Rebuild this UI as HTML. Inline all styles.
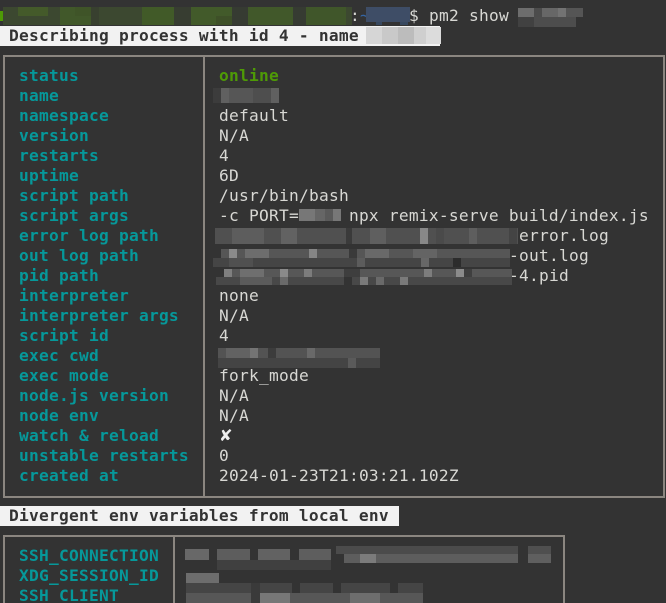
<!DOCTYPE html>
<html><head><meta charset="utf-8"><style>
html,body{margin:0;padding:0;background:#333;width:666px;height:603px;overflow:hidden}
#t{position:relative;width:666px;height:603px;overflow:hidden;font:16.2px/20px "DejaVu Sans Mono","Liberation Mono",monospace;letter-spacing:.25px;color:#d8d8d4}
.l{position:absolute;white-space:pre;height:20px}
.k{left:19px;color:#06989a;font-weight:bold}
.v{left:219px}
.b{position:absolute;background:#8b8680}
.bar{position:absolute;left:0;height:20px;background:#f2f2f2}
.h{color:#333;font-weight:bold}
svg{position:absolute;left:0;top:0}
</style></head><body><div id="t">
<div class="bar" style="top:26px;width:440px"></div>
<div class="bar" style="top:506px;width:399px"></div>
<div class="b" style="left:3px;top:55px;width:662px;height:2px"></div>
<div class="b" style="left:3px;top:496px;width:662px;height:2px"></div>
<div class="b" style="left:3px;top:55px;width:2px;height:443px"></div>
<div class="b" style="left:663px;top:55px;width:2px;height:443px"></div>
<div class="b" style="left:203px;top:55px;width:2px;height:443px"></div>
<div class="b" style="left:3px;top:535px;width:562px;height:2px"></div>
<div class="b" style="left:3px;top:535px;width:2px;height:68px"></div>
<div class="b" style="left:563px;top:535px;width:2px;height:68px"></div>
<div class="b" style="left:173px;top:535px;width:2px;height:68px"></div>

<div class="l" style="left:409px;top:6px">$ pm2 show</div>
<div class="l" style="left:350px;top:6px">:<span style="color:#3465a4">~</span></div>
<div class="l h" style="left:9px;top:26px">Describing process with id 4 - name</div>
<div class="l h" style="left:9px;top:506px">Divergent env variables from local env</div>

<div class="l k" style="top:66px">status</div><div class="l v" style="top:66px;color:#4e9a06;font-weight:bold">online</div>
<div class="l k" style="top:86px">name</div>
<div class="l k" style="top:106px">namespace</div><div class="l v" style="top:106px">default</div>
<div class="l k" style="top:126px">version</div><div class="l v" style="top:126px">N/A</div>
<div class="l k" style="top:146px">restarts</div><div class="l v" style="top:146px">4</div>
<div class="l k" style="top:166px">uptime</div><div class="l v" style="top:166px">6D</div>
<div class="l k" style="top:186px">script path</div><div class="l v" style="top:186px">/usr/bin/bash</div>
<div class="l k" style="top:206px">script args</div><div class="l v" style="top:206px">-c PORT=     npx remix-serve build/index.js</div>
<div class="l k" style="top:226px">error log path</div><div class="l" style="left:519px;top:226px">error.log</div>
<div class="l k" style="top:246px">out log path</div><div class="l" style="left:509px;top:246px">-out.log</div>
<div class="l k" style="top:266px">pid path</div><div class="l" style="left:509px;top:266px">-4.pid</div>
<div class="l k" style="top:286px">interpreter</div><div class="l v" style="top:286px">none</div>
<div class="l k" style="top:306px">interpreter args</div><div class="l v" style="top:306px">N/A</div>
<div class="l k" style="top:326px">script id</div><div class="l v" style="top:326px">4</div>
<div class="l k" style="top:346px">exec cwd</div>
<div class="l k" style="top:366px">exec mode</div><div class="l v" style="top:366px">fork_mode</div>
<div class="l k" style="top:386px">node.js version</div><div class="l v" style="top:386px">N/A</div>
<div class="l k" style="top:406px">node env</div><div class="l v" style="top:406px">N/A</div>
<div class="l k" style="top:426px">watch &amp; reload</div><div class="l v" style="top:426px;font-family:'DejaVu Sans',sans-serif;font-weight:bold;color:#eee">✘</div>
<div class="l k" style="top:446px">unstable restarts</div><div class="l v" style="top:446px">0</div>
<div class="l k" style="top:466px">created at</div><div class="l v" style="top:466px">2024-01-23T21:03:21.102Z</div>
<div class="l k" style="top:546px">SSH_CONNECTION</div>
<div class="l k" style="top:566px">XDG_SESSION_ID</div>
<div class="l k" style="top:586px">SSH_CLIENT</div>

<svg width="666" height="603" xmlns="http://www.w3.org/2000/svg" shape-rendering="crispEdges">
<!-- prompt green -->
<rect x="0" y="11" width="3" height="10" fill="#4e9a06"/>
<rect x="3" y="7" width="349" height="18" fill="#3c4830"/>
<rect x="18" y="7" width="30" height="9" fill="#445a2a"/>
<rect x="60" y="7" width="31" height="18" fill="#41582a"/>
<rect x="142" y="7" width="32" height="18" fill="#415a28"/>
<rect x="191" y="7" width="41" height="18" fill="#425a2a"/>
<rect x="248" y="7" width="45" height="18" fill="#41582a"/>
<rect x="306" y="7" width="40" height="18" fill="#40562a"/>
<rect x="75" y="7" width="16" height="9" fill="#3f5428"/>
<rect x="216" y="16" width="16" height="9" fill="#3e5028"/>
<rect x="91" y="7" width="8" height="18" fill="#38402f"/>
<rect x="174" y="7" width="17" height="18" fill="#373d31"/>
<rect x="232" y="7" width="16" height="18" fill="#363b32"/>
<rect x="293" y="7" width="13" height="18" fill="#363b32"/>
<!-- prompt blue -->
<rect x="366" y="7" width="44" height="15" fill="#3e4d66"/><rect x="376" y="22" width="6" height="3" fill="#37485f"/><rect x="400" y="22" width="8" height="3" fill="#37485f"/>
<!-- pm2 name -->
<rect x="518" y="8" width="16" height="9" fill="#6d6d6d"/><rect x="534" y="8" width="8" height="9" fill="#4c4c4c"/><rect x="542" y="8" width="16" height="9" fill="#676767"/><rect x="558" y="8" width="8" height="9" fill="#737373"/><rect x="566" y="8" width="17" height="9" fill="#555"/>
<rect x="518" y="17" width="16" height="10" fill="#414141"/><rect x="534" y="17" width="42" height="10" fill="#4d4d4d"/>
<!-- title name light -->
<rect x="366" y="27" width="16" height="17" fill="#d6d6d6"/><rect x="382" y="27" width="16" height="17" fill="#c9c9c9"/><rect x="398" y="27" width="16" height="17" fill="#bcbcbc"/><rect x="414" y="27" width="12" height="17" fill="#cfcfcf"/><rect x="426" y="27" width="15" height="17" fill="#dcdcdc"/>
<!-- name value -->
<rect x="213" y="88" width="8" height="15" fill="#3c3c3c"/><rect x="221" y="88" width="8" height="15" fill="#606060"/><rect x="229" y="88" width="24" height="15" fill="#565656"/><rect x="253" y="88" width="18" height="15" fill="#4e4e4e"/><rect x="271" y="88" width="8" height="15" fill="#606060"/>
<!-- PORT -->
<rect x="299" y="209" width="16" height="12" fill="#777"/><rect x="315" y="209" width="10" height="12" fill="#666"/><rect x="325" y="209" width="8" height="12" fill="#5a5a5a"/><rect x="333" y="209" width="8" height="12" fill="#777"/>
<!-- error log -->
<rect x="215" y="228" width="303" height="16" fill="#505050"/><rect x="232" y="228" width="32" height="16" fill="#5d5d5d"/><rect x="281" y="228" width="16" height="16" fill="#626262"/><rect x="346" y="228" width="6" height="16" fill="#3a3a3a"/><rect x="370" y="228" width="16" height="16" fill="#5f5f5f"/><rect x="420" y="228" width="8" height="16" fill="#888"/><rect x="436" y="228" width="8" height="16" fill="#4a4a4a"/><rect x="469" y="228" width="8" height="16" fill="#5e5e5e"/><rect x="509" y="228" width="8" height="16" fill="#444"/>
<!-- out log -->
<rect x="221" y="249" width="289" height="9" fill="#565656"/><rect x="229" y="249" width="8" height="9" fill="#8a8a8a"/><rect x="245" y="249" width="24" height="9" fill="#6d6d6d"/><rect x="309" y="249" width="8" height="9" fill="#858585"/><rect x="349" y="249" width="8" height="9" fill="#3a3a3a"/><rect x="365" y="249" width="24" height="9" fill="#696969"/><rect x="413" y="249" width="24" height="9" fill="#646464"/>
<rect x="213" y="258" width="297" height="9" fill="#454545"/><rect x="229" y="258" width="24" height="9" fill="#505050"/><rect x="357" y="258" width="8" height="9" fill="#5c5c5c"/><rect x="421" y="258" width="8" height="9" fill="#676767"/><rect x="453" y="258" width="8" height="9" fill="#2c2c2c"/>
<!-- pid -->
<rect x="224" y="269" width="288" height="8" fill="#575757"/><rect x="224" y="269" width="8" height="8" fill="#7f7f7f"/><rect x="240" y="269" width="24" height="8" fill="#6f6f6f"/><rect x="280" y="269" width="8" height="8" fill="#8a8a8a"/><rect x="304" y="269" width="8" height="8" fill="#7c7c7c"/><rect x="344" y="269" width="16" height="8" fill="#3e3e3e"/><rect x="424" y="269" width="8" height="8" fill="#7d7d7d"/><rect x="456" y="269" width="8" height="8" fill="#8b8b8b"/><rect x="464" y="269" width="8" height="8" fill="#3f3f3f"/>
<rect x="216" y="277" width="296" height="8" fill="#484848"/><rect x="240" y="277" width="32" height="8" fill="#5b5b5b"/><rect x="280" y="277" width="8" height="8" fill="#6a6a6a"/><rect x="360" y="277" width="8" height="8" fill="#7a7a7a"/><rect x="376" y="277" width="8" height="8" fill="#6a6a6a"/><rect x="400" y="277" width="8" height="8" fill="#7a7a7a"/><rect x="344" y="277" width="8" height="8" fill="#333"/>
<!-- exec cwd -->
<rect x="218" y="348" width="162" height="10" fill="#535353"/><rect x="226" y="348" width="32" height="10" fill="#626262"/><rect x="250" y="348" width="8" height="10" fill="#747474"/><rect x="268" y="348" width="8" height="10" fill="#3c3c3c"/><rect x="307" y="348" width="8" height="10" fill="#696969"/>
<rect x="218" y="358" width="162" height="10" fill="#444"/><rect x="348" y="358" width="8" height="10" fill="#5a5a5a"/>
<!-- SSH conn -->
<rect x="185" y="549" width="24" height="11" fill="#686868"/><rect x="217" y="549" width="33" height="11" fill="#5d5d5d"/><rect x="258" y="549" width="32" height="11" fill="#626262"/><rect x="299" y="549" width="32" height="11" fill="#5e5e5e"/>
<rect x="217" y="560" width="114" height="10" fill="#404040"/>
<rect x="336" y="546" width="182" height="8" fill="#4b4b4b"/><rect x="528" y="546" width="23" height="8" fill="#4f4f4f"/>
<rect x="344" y="554" width="174" height="9" fill="#5d5d5d"/><rect x="528" y="554" width="23" height="9" fill="#5f5f5f"/><rect x="360" y="554" width="16" height="9" fill="#7b7b7b"/>
<!-- session id -->
<rect x="186" y="573" width="33" height="10" fill="#6d6d6d"/>
<rect x="186" y="583" width="237" height="10" fill="#454545"/>
<rect x="186" y="593" width="237" height="10" fill="#575757"/><rect x="260" y="593" width="30" height="10" fill="#777"/><rect x="350" y="593" width="30" height="10" fill="#6e6e6e"/>
<rect x="251" y="583" width="9" height="20" fill="#3a3a3a"/><rect x="292" y="583" width="8" height="10" fill="#333"/><rect x="333" y="583" width="8" height="10" fill="#333"/><rect x="390" y="583" width="8" height="10" fill="#333"/>
</svg>
</div></body></html>
